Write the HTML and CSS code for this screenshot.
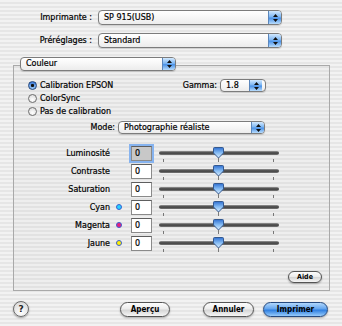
FILE: index.html
```html
<!DOCTYPE html>
<html lang="fr">
<head>
<meta charset="UTF-8">
<meta name="viewport" content="width=device-width, initial-scale=1.0">
<title>Imprimer</title>
<link rel="stylesheet" href="styles.css">
</head>
<body>
<svg class="defs" width="0" height="0">
    <defs>
        <linearGradient id="pouce" x1="0" y1="0" x2="0" y2="1">
            <stop offset="0" stop-color="#2f6fd0"/>
            <stop offset="0.5" stop-color="#86bcf4"/>
            <stop offset="1" stop-color="#dcefff"/>
        </linearGradient>
    </defs>
</svg>

<div class="fenetre">
    <div class="ligne-haut">
        <span class="etiquette">Imprimante :</span>
        <div class="popup popup-large"><span class="txt">SP 915(USB)</span><span class="cap"><svg width="5" height="8" viewBox="0 0 5 8"><path d="M2.5 0L5 3H0z M2.5 8L5 5H0z" fill="#111"/></svg></span></div>
    </div>
    <div class="ligne-haut">
        <span class="etiquette">Préréglages :</span>
        <div class="popup popup-large"><span class="txt">Standard</span><span class="cap"><svg width="5" height="8" viewBox="0 0 5 8"><path d="M2.5 0L5 3H0z M2.5 8L5 5H0z" fill="#111"/></svg></span></div>
    </div>

    <div class="entete-panneau">
        <div class="popup popup-couleur"><span class="txt">Couleur</span><span class="cap"><svg width="5" height="8" viewBox="0 0 5 8"><path d="M2.5 0L5 3H0z M2.5 8L5 5H0z" fill="#111"/></svg></span></div>
    </div>

    <div class="panneau">
        <div class="calibration">
            <div class="radios">
                <label class="radio"><span class="rond actif"></span>Calibration EPSON</label>
                <label class="radio"><span class="rond"></span>ColorSync</label>
                <label class="radio"><span class="rond"></span>Pas de calibration</label>
            </div>
            <div class="gamma">
                <span>Gamma:</span>
                <div class="popup popup-gamma"><span class="txt">1.8</span><span class="cap"><svg width="5" height="8" viewBox="0 0 5 8"><path d="M2.5 0L5 3H0z M2.5 8L5 5H0z" fill="#111"/></svg></span></div>
            </div>
        </div>

        <div class="ligne-mode">
            <span class="etiquette-mode">Mode:</span>
            <div class="popup popup-mode"><span class="txt">Photographie réaliste</span><span class="cap"><svg width="5" height="8" viewBox="0 0 5 8"><path d="M2.5 0L5 3H0z M2.5 8L5 5H0z" fill="#111"/></svg></span></div>
        </div>

        <div class="reglages">
            <div class="reglage">
                <span class="nom">Luminosité</span><span class="pastille-case"></span>
                <span class="valeur focus">0</span>
                <div class="curseur"><span class="piste"></span><span class="cran g"></span><span class="cran d"></span><svg class="pouce" width="11" height="15" viewBox="0 0 11 15"><path d="M1.5 .5h8a1 1 0 0 1 1 1v4.5l-5 5-5-5v-4.5a1 1 0 0 1 1-1z" fill="url(#pouce)" stroke="#34598f"/><line x1="5.5" y1="11" x2="5.5" y2="15" stroke="#7a7a7a"/></svg></div>
            </div>
            <div class="reglage">
                <span class="nom">Contraste</span><span class="pastille-case"></span>
                <span class="valeur">0</span>
                <div class="curseur"><span class="piste"></span><span class="cran g"></span><span class="cran d"></span><svg class="pouce" width="11" height="15" viewBox="0 0 11 15"><path d="M1.5 .5h8a1 1 0 0 1 1 1v4.5l-5 5-5-5v-4.5a1 1 0 0 1 1-1z" fill="url(#pouce)" stroke="#34598f"/><line x1="5.5" y1="11" x2="5.5" y2="15" stroke="#7a7a7a"/></svg></div>
            </div>
            <div class="reglage">
                <span class="nom">Saturation</span><span class="pastille-case"></span>
                <span class="valeur">0</span>
                <div class="curseur"><span class="piste"></span><span class="cran g"></span><span class="cran d"></span><svg class="pouce" width="11" height="15" viewBox="0 0 11 15"><path d="M1.5 .5h8a1 1 0 0 1 1 1v4.5l-5 5-5-5v-4.5a1 1 0 0 1 1-1z" fill="url(#pouce)" stroke="#34598f"/><line x1="5.5" y1="11" x2="5.5" y2="15" stroke="#7a7a7a"/></svg></div>
            </div>
            <div class="reglage">
                <span class="nom">Cyan</span><span class="pastille-case"><span class="pastille cyan"></span></span>
                <span class="valeur">0</span>
                <div class="curseur"><span class="piste"></span><span class="cran g"></span><span class="cran d"></span><svg class="pouce" width="11" height="15" viewBox="0 0 11 15"><path d="M1.5 .5h8a1 1 0 0 1 1 1v4.5l-5 5-5-5v-4.5a1 1 0 0 1 1-1z" fill="url(#pouce)" stroke="#34598f"/><line x1="5.5" y1="11" x2="5.5" y2="15" stroke="#7a7a7a"/></svg></div>
            </div>
            <div class="reglage">
                <span class="nom">Magenta</span><span class="pastille-case"><span class="pastille magenta"></span></span>
                <span class="valeur">0</span>
                <div class="curseur"><span class="piste"></span><span class="cran g"></span><span class="cran d"></span><svg class="pouce" width="11" height="15" viewBox="0 0 11 15"><path d="M1.5 .5h8a1 1 0 0 1 1 1v4.5l-5 5-5-5v-4.5a1 1 0 0 1 1-1z" fill="url(#pouce)" stroke="#34598f"/><line x1="5.5" y1="11" x2="5.5" y2="15" stroke="#7a7a7a"/></svg></div>
            </div>
            <div class="reglage">
                <span class="nom">Jaune</span><span class="pastille-case"><span class="pastille jaune"></span></span>
                <span class="valeur">0</span>
                <div class="curseur"><span class="piste"></span><span class="cran g"></span><span class="cran d"></span><svg class="pouce" width="11" height="15" viewBox="0 0 11 15"><path d="M1.5 .5h8a1 1 0 0 1 1 1v4.5l-5 5-5-5v-4.5a1 1 0 0 1 1-1z" fill="url(#pouce)" stroke="#34598f"/><line x1="5.5" y1="11" x2="5.5" y2="15" stroke="#7a7a7a"/></svg></div>
            </div>
        </div>

        <div class="ligne-aide">
            <button type="button" class="bouton bouton-aide">Aide</button>
        </div>
    </div>

    <div class="pied">
        <button type="button" class="aide-rond">?</button>
        <button type="button" class="bouton apercu">Aperçu</button>
        <button type="button" class="bouton annuler">Annuler</button>
        <button type="button" class="bouton imprimer">Imprimer</button>
    </div>
</div>
</body>
</html>
```

FILE: styles.css
```css
html, body {
    margin: 0;
    padding: 0;
}
body {
    width: 342px;
    height: 326px;
    overflow: hidden;
    font-family: "DejaVu Sans", Verdana, sans-serif;
    font-size: 8px;
    color: #000;
    -webkit-text-stroke: 0.2px #000;
    background: repeating-linear-gradient(to bottom, #f2f2f2 0, #f2f2f2 2px, #e6e6e6 2px, #e6e6e6 4px);
}
.defs {
    position: absolute;
}
.fenetre {
    padding-top: 10px;
}

/* lignes du haut */
.ligne-haut {
    display: flex;
    align-items: center;
    height: 15px;
    margin-bottom: 8px;
}
.etiquette {
    width: 92px;
    margin-right: 6px;
    text-align: right;
    white-space: nowrap;
}

/* menus déroulants */
.popup {
    display: flex;
    box-sizing: border-box;
    height: 15px;
    border: 1px solid #7c7c7c;
    border-radius: 4px;
    background: linear-gradient(#ffffff, #f6f6f6 50%, #ececec);
    box-shadow: 0 1px 1px rgba(0, 0, 0, 0.15);
    overflow: hidden;
}
.popup .txt {
    flex: 1;
    padding-left: 5px;
    line-height: 13px;
    white-space: nowrap;
    overflow: hidden;
}
.popup .cap {
    width: 12px;
    display: flex;
    align-items: center;
    justify-content: center;
    border-left: 1px solid #5b86bb;
    background: linear-gradient(#d3e9fe, #7db6f3 45%, #4b92e7 55%, #b9ddfd);
}
.popup-large {
    width: 184px;
}
.entete-panneau {
    position: relative;
    z-index: 1;
    height: 14px;
    margin-top: 9px;
    margin-bottom: -6px;
    padding-left: 20px;
}
.popup-couleur {
    width: 156px;
    height: 14px;
}
.popup-couleur .txt {
    line-height: 12px;
}

/* panneau */
.panneau {
    box-sizing: border-box;
    height: 226px;
    margin: 0 12px 0 13px;
    border: 1px solid #a9a9a9;
    background: rgba(0, 0, 0, 0.015);
    padding-top: 13px;
}
.calibration {
    display: flex;
}
.radios {
    padding-left: 14px;
}
.radio {
    display: flex;
    align-items: center;
    height: 13px;
    white-space: nowrap;
}
.rond {
    box-sizing: border-box;
    width: 9px;
    height: 9px;
    margin-right: 3px;
    border-radius: 50%;
    border: 1px solid #6e6e6e;
    background: radial-gradient(circle at 50% 70%, #ffffff, #d8d8d8);
}
.rond.actif {
    border-color: #24467c;
    background: radial-gradient(circle, #111 0, #111 1.3px, transparent 1.8px), linear-gradient(#3b7ad8, #9ccaf7);
}
.gamma {
    display: flex;
    align-items: center;
    height: 13px;
    margin-left: auto;
    margin-right: 63px;
}
.gamma span {
    margin-right: 3px;
}
.popup-gamma {
    width: 46px;
    height: 13px;
}
.popup-gamma .txt, .popup-mode .txt {
    line-height: 11px;
}
.ligne-mode {
    display: flex;
    align-items: center;
    margin-top: 3px;
    height: 13px;
}
.etiquette-mode {
    width: 101px;
    margin-right: 3px;
    text-align: right;
}
.popup-mode {
    width: 147px;
    height: 13px;
}

/* réglages */
.reglages {
    margin-top: 10px;
}
.reglage {
    display: flex;
    align-items: center;
    height: 18px;
}
.nom {
    width: 96px;
    text-align: right;
}
.pastille-case {
    width: 21px;
    display: flex;
    align-items: center;
}
.pastille {
    box-sizing: border-box;
    width: 6px;
    height: 6px;
    margin-left: 6px;
    border-radius: 50%;
    border: 1px solid #3a5fd0;
}
.cyan { background: #28d0ff; }
.magenta { background: #e8207f; }
.jaune { background: #fff000; }
.valeur {
    box-sizing: border-box;
    width: 21px;
    height: 15px;
    padding-left: 3px;
    line-height: 13px;
    border: 1px solid #8a8a8a;
    border-top-color: #5e5e5e;
    background: #fff;
}
.valeur.focus {
    background: #c8c8c8;
    box-shadow: 0 0 0 2px #86b3ef;
}
.curseur {
    position: relative;
    width: 120px;
    height: 18px;
    margin-left: 7px;
}
.piste {
    position: absolute;
    left: 0;
    right: 0;
    top: 7px;
    height: 4px;
    border-radius: 2px;
    background: linear-gradient(#9a9a9a, #3c3c3c 50%, #7a7a7a);
}
.cran {
    position: absolute;
    top: 15px;
    width: 1px;
    height: 3px;
    background: #777;
}
.cran.g { left: 4px; }
.cran.d { left: 114px; }
.pouce {
    position: absolute;
    left: 54px;
    top: 3px;
}

/* boutons */
.ligne-aide {
    display: flex;
    justify-content: flex-end;
    margin-top: 19px;
    padding-right: 7px;
}
.bouton {
    box-sizing: border-box;
    height: 15px;
    padding: 0;
    border: 1px solid #545454;
    border-radius: 8px;
    font-family: "DejaVu Sans Condensed", "DejaVu Sans", sans-serif;
    font-size: 8px;
    font-weight: bold;
    color: #000;
    -webkit-text-stroke: 0;
    background: linear-gradient(#fdfdfd, #ececec 45%, #d6d6d6 55%, #f6f6f6);
    box-shadow: 0 1px 2px rgba(0, 0, 0, 0.3);
}
.bouton-aide {
    width: 34px;
    height: 12px;
    border-radius: 6px;
    font-size: 7px;
    line-height: 10px;
}
.pied {
    display: flex;
    align-items: center;
    margin-top: 10px;
    padding-left: 13px;
}
.aide-rond {
    box-sizing: border-box;
    width: 16px;
    height: 16px;
    padding: 0;
    border-radius: 50%;
    border: 1px solid #6a6a6a;
    font-family: "DejaVu Sans", Verdana, sans-serif;
    font-size: 9px;
    font-weight: bold;
    color: #222;
    -webkit-text-stroke: 0;
    background: radial-gradient(circle at 50% 75%, #ffffff, #d2d2d2);
    box-shadow: 0 1px 2px rgba(0, 0, 0, 0.35);
}
.apercu {
    width: 50px;
    margin-left: 91px;
}
.annuler {
    width: 51px;
    margin-left: 33px;
}
.imprimer {
    width: 65px;
    margin-left: 9px;
    border-color: #25497f;
    background: linear-gradient(#b1d7fc, #64a5ee 45%, #2f7fe0 55%, #97cbfb);
}
```
